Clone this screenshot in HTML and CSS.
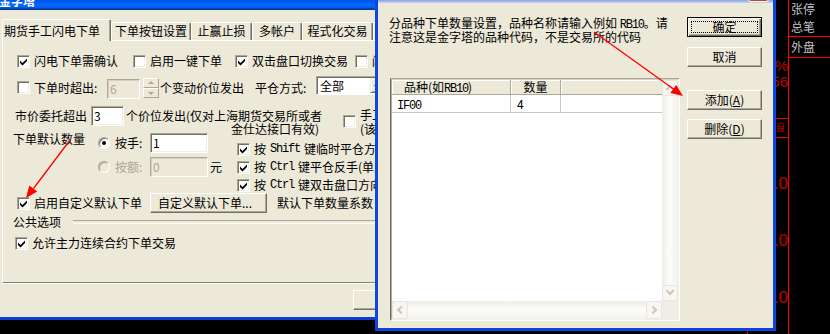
FILE: index.html
```html
<!DOCTYPE html>
<html lang="zh-CN">
<head>
<meta charset="utf-8">
<title>金字塔</title>
<link rel="stylesheet" href="styles.css">
</head>
<body>
<div class="desk">
  <svg class="defs" aria-hidden="true"><symbol id="ck" viewBox="0 0 11 11"><path d="M2 4.5v2.5l2.5 2.5l4.5-4.5v-2.5l-4.5 4.5z"/></symbol></svg>

  <aside class="quote">
    <div class="qleft">
      <div class="qpct">0.25%</div>
      <div class="qnum">3456</div>
      <div class="qbox">盘</div>
      <div class="qz qz1">0.0</div>
      <div class="qz">0.0</div>
      <div class="qz">0.0</div>
    </div>
    <div class="qright">
      <div class="qc qc1">张停<br>总笔</div>
      <div class="qc qc2">外盘</div>
    </div>
  </aside>
  <i class="tick"></i>

  <section class="win main">
    <header class="titlebar tgrad"><span class="ttl">金字塔</span></header>
    <div class="wbody">
      <nav class="tabs">
        <div class="tab sel t1">期货手工闪电下单</div>
        <div class="tab t2">下单按钮设置</div>
        <div class="tab t3">止赢止损</div>
        <div class="tab t4">多帐户</div>
        <div class="tab t5">程式化交易</div>
        <div class="tab t6">其他设置</div>
      </nav>
      <div class="panel">
        <div class="r1">
          <label class="chk"><i class="cb"><svg><use href="#ck"/></svg></i>闪电下单需确认</label>
          <label class="chk"><i class="cb"></i>启用一键下单</label>
          <label class="chk"><i class="cb"><svg><use href="#ck"/></svg></i>双击盘口切换交易</label>
          <label class="chk"><i class="cb"></i>闪电平仓</label>
        </div>
        <div class="row r2">
          <label class="chk"><i class="cb"></i>下单时超出:</label>
          <span class="inp dis w33">6</span>
          <span class="spin"><i class="up"></i><i class="dn"></i></span>
          <span class="t-a">个变动价位发出</span>
          <span class="t-b">平仓方式:</span>
          <span class="sel"><span class="selv">全部</span><i class="dd"></i></span>
        </div>
        <div class="row r3">
          <span class="t-c">市价委托超出</span>
          <span class="inp w33">3</span>
          <span class="t-d">个价位发出(仅对上海期货交易所或者<span class="l2">金仕达接口有效)</span></span>
          <label class="chk chk2"><i class="cb"></i><span>手工下单时<br>(该选项</span></label>
        </div>
        <div class="row sec">
          <span class="lbl-qty">下单默认数量</span>
          <div class="radios">
            <div class="rrow"><i class="rd on"></i><span class="rl">按手:</span><span class="inp w58">1</span></div>
            <div class="rrow"><i class="rd dis"></i><span class="rl dim">按额:</span><span class="inp dis w58">0</span><span class="yuan">元</span></div>
          </div>
          <div class="rcol">
            <label class="chk"><i class="cb"><svg><use href="#ck"/></svg></i>按<span class="en">Shift</span>键临时平仓方式切换</label>
            <label class="chk"><i class="cb"><svg><use href="#ck"/></svg></i>按<span class="en">Ctrl</span>键平仓反手(单则平仓)</label>
            <label class="chk"><i class="cb"><svg><use href="#ck"/></svg></i>按<span class="en">Ctrl</span>键双击盘口方向反向</label>
          </div>
        </div>
        <div class="row r6">
          <label class="chk"><i class="cb"><svg><use href="#ck"/></svg></i>启用自定义默认下单</label>
          <button class="btn">自定义默认下单...</button>
          <span class="t-e">默认下单数量系数</span>
        </div>
        <div class="grp">公共选项</div>
        <div class="row r7">
          <label class="chk"><i class="cb"><svg><use href="#ck"/></svg></i>允许主力连续合约下单交易</label>
        </div>
      </div>
      <div class="foot"><button class="btn">确定</button></div>
    </div>
  </section>

  <section class="win dlg">
    <header class="dtitle"><i class="xbtn"></i></header>
    <div class="dbody">
      <div class="dleft">
        <p class="dmsg">分品种下单数量设置，品种名称请输入例如 <span class="en">RB10</span>。请<br>注意这是金字塔的品种代码，不是交易所的代码</p>
        <div class="lv">
          <div class="lv-in">
            <div class="lv-main">
              <div class="lv-head"><span class="hc c1">品种(如<span class="en">RB10</span>)</span><span class="hc c2">数量</span><span class="hc c3"></span></div>
              <div class="lv-row"><span class="dc c1"><span class="en">IF00</span></span><span class="dc c2">4</span><span class="dc c3"></span></div>
            </div>
            <div class="vs"><i class="sb up"></i><i class="trk"></i><i class="sb dn"></i></div>
            <div class="hs"><i class="sb lf"></i><i class="trk"></i><i class="sb rt"></i></div>
            <div class="corner"></div>
          </div>
        </div>
      </div>
      <div class="dright">
        <button class="btn def">确定</button>
        <button class="btn b2">取消</button>
        <button class="btn b3">添加(<u>A</u>)</button>
        <button class="btn b4">删除(<u>D</u>)</button>
      </div>
    </div>
  </section>

  <svg class="arrows" viewBox="0 0 830 334" aria-hidden="true">
    <line x1="70" y1="140" x2="33.5" y2="188.5"/>
    <polygon points="26,198 37.2,191.5 29.3,185.4"/>
    <line x1="594" y1="32" x2="673.5" y2="89"/>
    <polygon points="683,96 670.3,93.1 676.2,84.9"/>
  </svg>
</div>
</body>
</html>
```

FILE: styles.css
```css
* { box-sizing: border-box; margin: 0; padding: 0; }
html, body { width: 830px; height: 334px; overflow: hidden; background: #000; }
body { font: 12px/12px "Noto Sans CJK SC", "Noto Sans CJK JP", sans-serif; color: #000; }
.desk { position: relative; width: 830px; height: 334px; overflow: hidden; background: #000; }
.en { font-family: "Liberation Mono", monospace; font-size: 12px; letter-spacing: -1.2px; }
.defs { position: absolute; width: 0; height: 0; overflow: hidden; }
i { display: block; font-style: normal; }

/* ---------- windows ---------- */
.win { position: absolute; display: flex; flex-direction: column; }
.tgrad {
  background: linear-gradient(180deg, #0058EE 0%, #3593FF 4%, #288EFF 6%, #127DFF 8%, #036FFC 10%, #0262EE 14%, #0057E5 20%, #0054E3 24%, #0055EB 56%, #005BF5 66%, #026AFE 76%, #0062EF 86%, #0052D6 92%, #0040AB 94%, #003092 100%);
}
.main { left: 0; top: -12px; width: 378px; height: 332px; overflow: hidden; z-index: 2; }
.titlebar { flex: none; height: 22px; padding-top: 2px; color: #fff; font-weight: bold; line-height: 22px; overflow: hidden; white-space: nowrap; }
.ttl { margin-left: -1px; }
.wbody { flex: 1; display: flex; flex-direction: column; background: #ECE9D8; border-bottom: 3px solid #0B3FD6; }

/* tabs */
.tabs { flex: none; height: 30px; padding: 9px 0 0 2px; display: flex; align-items: flex-end; position: relative; z-index: 1; }
.tabs > .tab { flex-shrink: 0; flex-grow: 0; height: 18px; border: 1px solid; border-bottom: 0; border-color: #fff #716F64 #fff #fff; box-shadow: inset -1px 0 0 #ACA899; border-radius: 2px 2px 0 0; background: #ECE9D8; text-align: center; line-height: 16px; white-space: nowrap; overflow: hidden; }
.tabs > .tab.sel { height: 22px; margin-bottom: -1px; line-height: 20px; }
.tabs > .t1 { flex-basis: 109px; } .tabs > .t2 { flex-basis: 80px; } .tabs > .t3 { flex-basis: 61px; }
.tabs > .t4 { flex-basis: 50px; } .tabs > .t5 { flex-basis: 71px; } .tabs > .t6 { flex-basis: 70px; }

.panel { flex: none; height: 243px; margin-left: 2px; padding-left: 10px; border-top: 1px solid #fff; border-left: 1px solid #fff; border-bottom: 1px solid #808080; box-shadow: 0 1px 0 #fff; }

.row { display: flex; align-items: flex-start; white-space: nowrap; }
.row > *, .rrow > * { flex-shrink: 0; }
.r1 { margin: 11px 0 0 4px; height: 18px; display: grid; grid-template-columns: 116px 102px 120px 100px; align-items: center; white-space: nowrap; }
.r2 { margin: 6px 0 0 4px; height: 22px; }
.r2 .chk { width: 90px; height: 13px; margin-top: 5px; }
.r2 .inp { margin-top: 3px; }
.t-a { margin: 5px 0 0 1px; line-height: 13px; }
.t-b { margin: 5px 0 0 11px; width: 61px; line-height: 13px; }
.r3 { margin: 8px 0 0 2px; height: 27px; }
.t-c { width: 76px; margin-top: 4px; }
.t-d { margin: 3px 0 0 2px; width: 198px; line-height: 13px; }
.t-d .l2 { display: block; padding-left: 105px; }
.chk2 { margin: 1px 0 0 19px; align-items: flex-start; }
.chk2 span { margin-top: 1px; line-height: 14px; }

.sec { height: 60px; }
.lbl-qty { width: 85px; }
.radios { width: 139px; display: flex; flex-direction: column; gap: 4px; }
.rrow { height: 20px; display: flex; align-items: center; }
.rl { margin-left: 5px; width: 35px; }
.dim { color: #ACA899; }
.yuan { margin-left: 2px; }
.rcol { margin-top: 7px; display: flex; flex-direction: column; }
.rcol .chk { height: 18px; }

.r6 { height: 20px; margin-left: 4px; align-items: center; }
.r6 .chk { width: 133px; }
.r6 .btn { width: 117px; text-align: left; padding-left: 7px; }
.t-e { margin-left: 10px; }
.grp { display: flex; margin-top: 3px; height: 12px; white-space: nowrap; }
.grp::after { content: ""; flex: 1; margin: 4px 0 0 12px; height: 2px; border-top: 1px solid #ACA899; border-bottom: 1px solid #fff; }
.r7 { margin: 6px 0 0 2px; height: 18px; align-items: center; }
.foot { padding: 7px 0 0 353px; }

/* ---------- controls ---------- */
.chk { display: flex; align-items: center; gap: 4px; white-space: nowrap; }
.chk > * { flex-shrink: 0; }
.cb { flex: none; width: 13px; height: 13px; background: #fff; border: 1px solid; border-color: #ACA899 #fff #fff #ACA899; box-shadow: inset 1px 1px 0 #716F64, inset -1px -1px 0 #F1EFE2; }
.cb svg { display: block; width: 11px; height: 11px; fill: #000; }
.rd { flex: none; width: 12px; height: 12px; border-radius: 50%; background: #fff; border: 1px solid; border-color: #ACA899 #fff #fff #ACA899; box-shadow: inset 1px 1px 0 #716F64, inset -1px -1px 0 #F1EFE2; position: relative; }
.rd.on::after { content: ""; position: absolute; left: 3px; top: 3px; width: 4px; height: 4px; border-radius: 50%; background: #000; }
.rd.dis { background: #ECE9D8; box-shadow: inset 1px 1px 0 #ACA899; }
.inp { flex: none; display: block; height: 20px; background: #fff; border: 1px solid; border-color: #ACA899 #fff #fff #ACA899; box-shadow: inset 1px 1px 0 #716F64, inset -1px -1px 0 #F1EFE2; padding-left: 2px; line-height: 18px; }
.inp.dis { background: #ECE9D8; color: #ACA899; border-color: #ACA899 #fff #fff #ACA899; box-shadow: inset 1px 1px 0 #D4D0C8; }
.w33 { width: 33px; } .w58 { width: 58px; }
.spin { flex: none; margin: 2px 0 0 3px; width: 16px; height: 20px; display: flex; flex-direction: column; }
.spin i { flex: 1; background: #ECE9D8; border: 1px solid; border-color: #fff #ACA899 #ACA899 #fff; position: relative; }
.spin i::after { content: ""; position: absolute; left: 4px; top: 2px; width: 0; height: 0; border-left: 3px solid transparent; border-right: 3px solid transparent; }
.spin .up::after { border-bottom: 3px solid #ACA899; }
.spin .dn::after { border-top: 3px solid #ACA899; top: 3px; }
.sel { flex: none; width: 72px; height: 19px; display: flex; padding: 1px; background: #fff; border: 1px solid; border-color: #ACA899 #fff #fff #ACA899; box-shadow: inset 1px 1px 0 #716F64; }
.selv { flex: 1; padding-left: 2px; line-height: 15px; }
.dd { flex: none; width: 16px; background: #ECE9D8; border: 1px solid; border-color: #ECE9D8 #716F64 #716F64 #ECE9D8; box-shadow: inset 1px 1px 0 #fff, inset -1px -1px 0 #ACA899; position: relative; }
.dd::after { content: ""; position: absolute; left: 3px; top: 6px; border-left: 4px solid transparent; border-right: 4px solid transparent; border-top: 4px solid #000; }

.btn { display: block; flex: none; width: 75px; height: 20px; font: inherit; color: #000; background: #ECE9D8; border: 1px solid; border-color: #fff #716F64 #716F64 #fff; box-shadow: inset -1px -1px 0 #ACA899; line-height: 18px; text-align: center; padding: 0; position: relative; white-space: nowrap; }
.btn.def { border-color: #000; box-shadow: inset 1px 1px 0 #fff, inset -1px -1px 0 #716F64, inset -2px -2px 0 #ACA899; }
.btn.def::after { content: ""; position: absolute; left: 3px; top: 3px; right: 3px; bottom: 3px; border: 1px dotted #000; }
.btn u { text-decoration: underline; text-underline-offset: 1px; }

/* ---------- dialog ---------- */
.dlg { left: 375px; top: -24px; width: 401px; height: 355px; z-index: 3; }
.dtitle { flex: none; height: 27px; display: flex; justify-content: flex-end; padding-right: 4px; background: linear-gradient(180deg, #0058EE 0%, #0054E3 50%, #4F83E8 85%, #9DB4EA 92%, #C9D5F0 100%); border-left: 3px solid #0B46E0; border-right: 3px solid #0B46E0; }
.xbtn { width: 21px; height: 21px; margin-top: 5px; border: 1px solid #fff; border-radius: 3px; background: linear-gradient(180deg, #E9896C, #D5532F 60%, #C2401B); }
.dbody { flex: 1; display: flex; background: #ECE9D8; border: 3px solid #0B46E0; border-top: 0; }
.dleft { flex: none; width: 302px; padding: 14px 0 0 11px; }
.dmsg { line-height: 12px; white-space: nowrap; }
.lv { margin: 35px 0 0 1px; width: 290px; height: 243px; border: 1px solid; border-color: #ACA899 #fff #fff #716F64; }
.lv-in { height: 100%; border: 1px solid; border-color: #D4D0C8 #F1EFE2 #F1EFE2 #ACA899; display: grid; grid-template-columns: 1fr 16px; grid-template-rows: 1fr 18px; background: #fff; }
.lv-main { overflow: hidden; background: #fff; }
.lv-head { display: flex; height: 15px; background: #ECE9D8; border-bottom: 1px solid #ACA899; }
.lv-head > *, .lv-row > * { flex-shrink: 0; }
.hc { height: 14px; line-height: 14px; border-right: 1px solid #ACA899; box-shadow: inset 1px 1px 0 #fff; white-space: nowrap; }
.c1 { width: 119px; } .c2 { width: 50px; } .lv-head > .c3, .lv-row > .c3 { flex: 1; border-right: 0; }
.hc.c1 { padding-left: 12px; }
.hc.c2 { text-align: center; }
.lv-row { display: flex; height: 18px; border-bottom: 1px solid #C8C8C8; }
.dc { line-height: 17px; border-right: 1px solid #C8C8C8; }
.dc.c1 { padding-left: 5px; }
.dc.c2 { padding-left: 6px; }
.vs { display: flex; flex-direction: column; background: linear-gradient(90deg, #EEEDE5, #FCFCFA 45%, #F3F2EC); }
.hs { display: flex; background: linear-gradient(180deg, #EEEDE5, #FCFCFA 45%, #F3F2EC); }
.trk { flex: 1; }
.sb { flex: none; width: 16px; height: 16px; border: 1px solid #E8E6DD; border-radius: 2px; background: #F7F6F2; position: relative; }
.hs .sb { height: 18px; }
.sb::after { content: ""; position: absolute; width: 4px; height: 4px; border: solid #CAC8BC; border-width: 0 2px 2px 0; left: 4px; top: 4px; }
.sb.up::after { transform: rotate(-135deg); top: 5px; }
.sb.dn::after { transform: rotate(45deg); top: 2px; }
.sb.lf::after { transform: rotate(135deg); left: 5px; top: 5px; }
.sb.rt::after { transform: rotate(-45deg); left: 3px; top: 5px; }
.corner { background: #EFEDE5; }
.dright { flex: none; margin-left: 7px; padding-top: 14px; }
.b2 { margin-top: 10px; } .b3 { margin-top: 23px; } .b4 { margin-top: 9px; }

/* ---------- quote panel ---------- */
.quote { position: absolute; left: 776px; top: 0; width: 54px; height: 334px; display: flex; background: #000; z-index: 1; }
.qleft { flex: none; width: 12px; display: flex; flex-direction: column; align-items: flex-end; overflow: hidden; color: #C00000; font-family: "Liberation Sans", sans-serif; white-space: nowrap; }
.qleft > * { flex-shrink: 0; }
.qpct { margin-top: 58px; font-size: 15px; line-height: 16px; }
.qnum { font-size: 15px; line-height: 16px; }
.qbox { align-self: stretch; margin-top: 28px; height: 20px; border-top: 1px solid #f00; border-bottom: 1px solid #f00; font: 9px/18px "Noto Sans CJK SC", sans-serif; color: #C00000; text-align: left; overflow: hidden; }
.qz { font-size: 17px; line-height: 20px; margin-top: 37px; }
.qz1 { margin-top: 36px; }
.qright { flex: 1; border-left: 1px solid #f00; color: #C0C0C0; }
.qc { border-bottom: 1px solid #f00; padding-left: 2px; white-space: nowrap; }
.qc1 { height: 37px; line-height: 18px; }
.qc2 { height: 21px; line-height: 20px; }
.tick { position: absolute; left: 747px; top: 331px; width: 1px; height: 3px; background: #f00; }

/* ---------- annotation arrows ---------- */
.arrows { position: absolute; left: 0; top: 0; width: 830px; height: 334px; z-index: 5; pointer-events: none; }
.arrows line { stroke: #f00; stroke-width: 1.3; }
.arrows polygon { fill: #f00; }
```
